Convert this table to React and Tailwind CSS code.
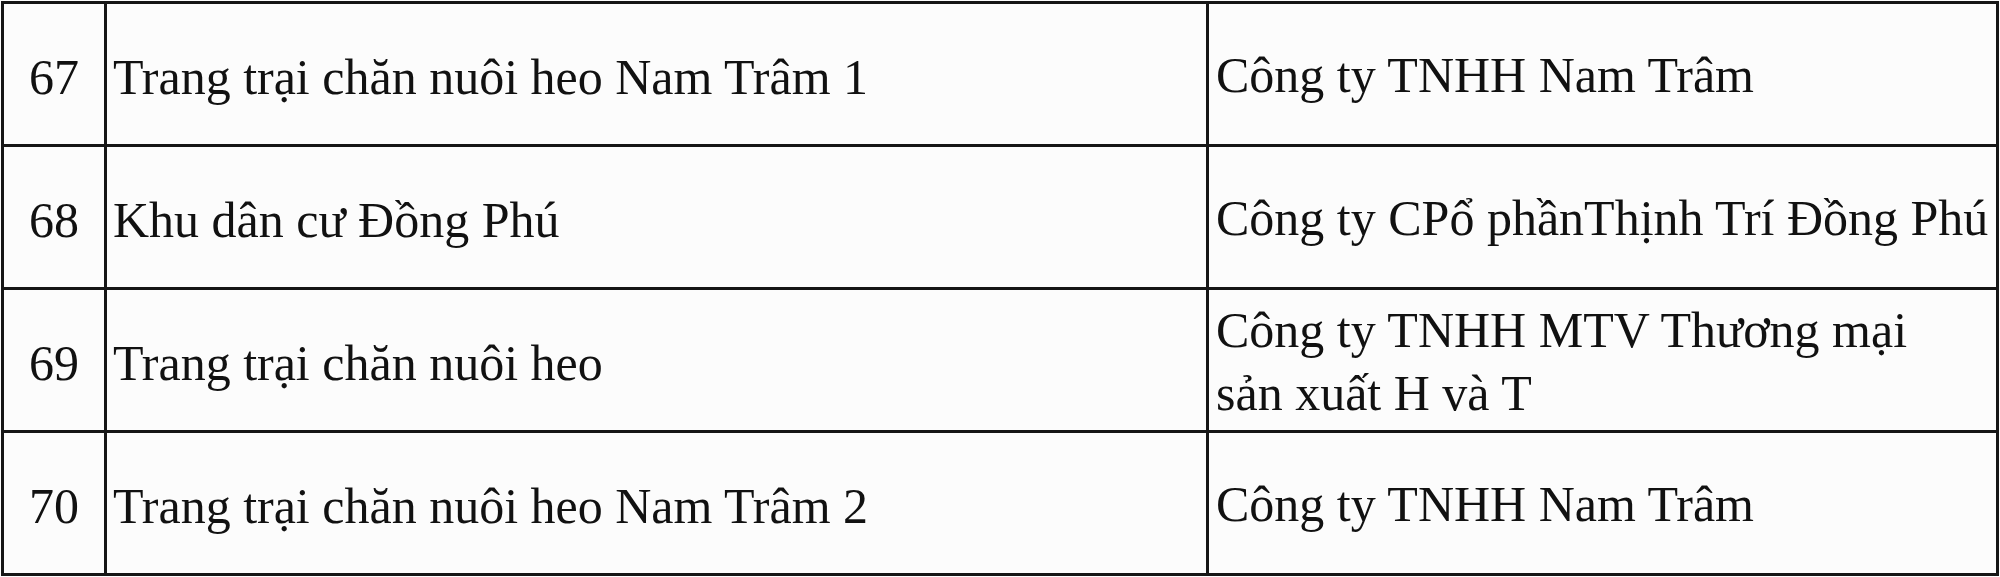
import React from 'react';

const rows = [
  { no: '67', name: 'Trang trại chăn nuôi heo Nam Trâm 1', owner: ['Công ty TNHH Nam Trâm'] },
  { no: '68', name: 'Khu dân cư Đồng Phú', owner: ['Công ty CPổ phầnThịnh Trí Đồng Phú'] },
  { no: '69', name: 'Trang trại chăn nuôi heo', owner: ['Công ty TNHH MTV Thương mại', 'sản xuất H và T'] },
  { no: '70', name: 'Trang trại chăn nuôi heo Nam Trâm 2', owner: ['Công ty TNHH Nam Trâm'] },
];

const App = () => {
  return (
    <div className="w-[2000px] h-[577px] bg-[#fcfcfc] pl-px pt-px overflow-hidden">
      <table
        className="table-fixed border-collapse w-[1998px] text-[50px] text-[#111]"
        style={{ fontFamily: '"Liberation Serif", "Times New Roman", serif' }}
      >
        <colgroup>
          <col className="w-[103px]" />
          <col className="w-[1102px]" />
          <col />
        </colgroup>
        <tbody>
          {rows.map((row) => (
            <tr key={row.no} className="h-[143px]">
              <td className="border-[3px] border-[#161616] pt-[5px] text-center align-middle leading-none">
                {row.no}
              </td>
              <td className="border-[3px] border-[#161616] pt-[5px] pl-[6px] align-middle leading-none whitespace-nowrap">
                {row.name}
              </td>
              <td className="border-[3px] border-[#161616] pt-[3px] pl-[7px] align-middle leading-[63px] whitespace-nowrap">
                {row.owner.map((line, i) => (
                  <div key={i}>{line}</div>
                ))}
              </td>
            </tr>
          ))}
        </tbody>
      </table>
    </div>
  );
};

export default App;
